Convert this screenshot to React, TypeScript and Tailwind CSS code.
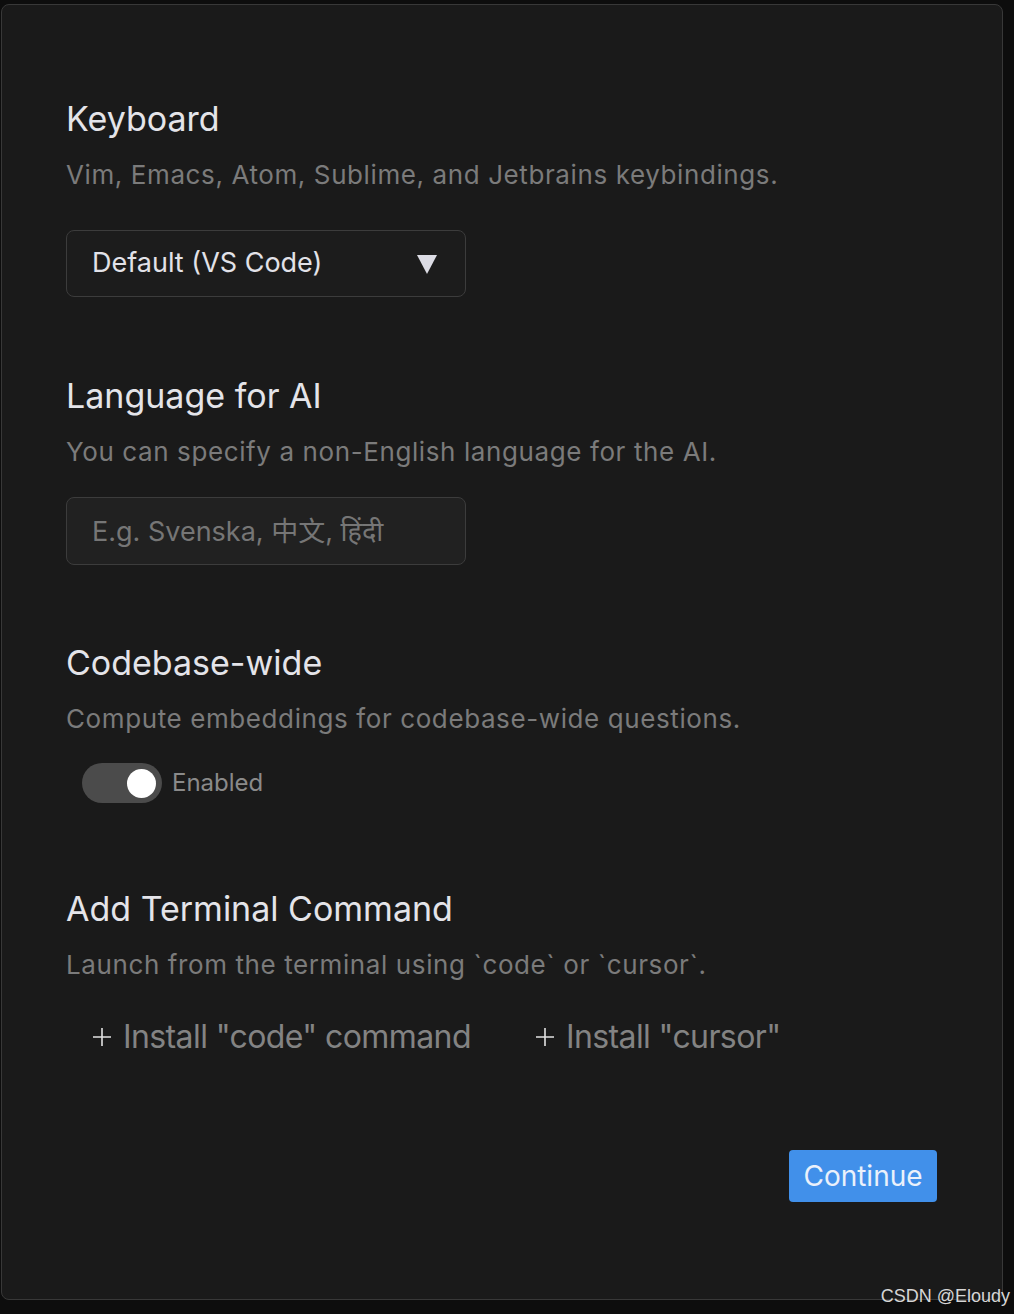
import React, { useState } from 'react';

const font = { fontFamily: 'Inter, "Noto Sans", "Noto Sans CJK SC", sans-serif' };

function Section({ title, description, children, className }: { title: string; description: string; children: React.ReactNode; className?: string }) {
  return (
    <div className={className}>
      <h2 className="text-[34px] leading-[40px] font-normal text-[#e4e4e9]">{title}</h2>
      <p className="mt-[20px] text-[26px] leading-[32px] tracking-[0.6px] text-[#7b7b7b]">{description}</p>
      {children}
    </div>
  );
}

function Plus() {
  return (
    <svg width="20" height="20" viewBox="0 0 20 20" className="shrink-0">
      <path d="M10 1v18M1 10h18" stroke="#e2e2e2" strokeWidth="1.6" />
    </svg>
  );
}

export default function App() {
  const [enabled, setEnabled] = useState(true);
  const [language, setLanguage] = useState('');

  return (
    <div className="min-h-[1314px] bg-[#0d0d0d] pt-[4px] pl-[1px] pr-[11px] pb-[14px]" style={font}>
      <div className="relative h-[1296px] rounded-[8px] border border-[#383838] bg-[#1a1a1a] pl-[64px] pr-[65px] pt-[94px]">
        <Section title="Keyboard" description="Vim, Emacs, Atom, Sublime, and Jetbrains keybindings.">
          <button className="mt-[39px] flex h-[67px] w-[400px] items-center justify-between rounded-[8px] border border-[#3c3c3c] bg-[#1c1c1c] pl-[25px] pr-[28px] text-[27px] text-[#e2e2e8]">
            <span>Default (VS Code)</span>
            <svg width="20" height="20" viewBox="0 0 20 20">
              <polygon points="0,1 20,1 10,20" fill="#dcdce4" />
            </svg>
          </button>
        </Section>

        <Section className="mt-[79px]" title="Language for AI" description="You can specify a non-English language for the AI.">
          <input
            value={language}
            onChange={e => setLanguage(e.target.value)}
            placeholder="E.g. Svenska, 中文, हिंदी"
            className="mt-[29px] block h-[68px] w-[400px] rounded-[8px] border border-[#3c3c3c] bg-[#212121] px-[25px] text-[27px] text-[#e2e2e8] placeholder:text-[#767676] outline-none"
          />
        </Section>

        <Section className="mt-[78px]" title="Codebase-wide" description="Compute embeddings for codebase-wide questions.">
          <div className="mt-[28px] ml-[16px] flex items-center gap-[10px]">
            <button
              onClick={() => setEnabled(!enabled)}
              className={`flex h-[40px] w-[80px] items-center rounded-full bg-[#4b4b4b] px-[6px] ${enabled ? 'justify-end' : 'justify-start'}`}
            >
              <span className="block h-[29px] w-[29px] rounded-full bg-white" />
            </button>
            <span className="text-[24px] leading-[32px] text-[#8a8a8a]">Enabled</span>
          </div>
        </Section>

        <Section className="mt-[86px]" title="Add Terminal Command" description="Launch from the terminal using `code` or `cursor`.">
          <div className="mt-[36px] ml-[26px] flex items-center gap-[64px] text-[32px] leading-[40px] text-[#838383] tracking-[-0.6px]">
            <button className="flex items-center gap-[11px]">
              <Plus />
              <span>Install "code" command</span>
            </button>
            <button className="flex items-center gap-[11px]">
              <Plus />
              <span>Install "cursor"</span>
            </button>
          </div>
        </Section>

        <div className="mt-[93px] flex justify-end">
          <button className="h-[52px] w-[148px] rounded-[4px] bg-[#4190ea] text-[28px] text-[#eaf1fb]">Continue</button>
        </div>

        <span className="absolute right-[-8px] bottom-[-8px] text-[18px] leading-[22px] text-[#d6d6d6]" style={{ fontFamily: '"Liberation Sans", sans-serif' }}>
          CSDN @Eloudy
        </span>
      </div>
    </div>
  );
}
